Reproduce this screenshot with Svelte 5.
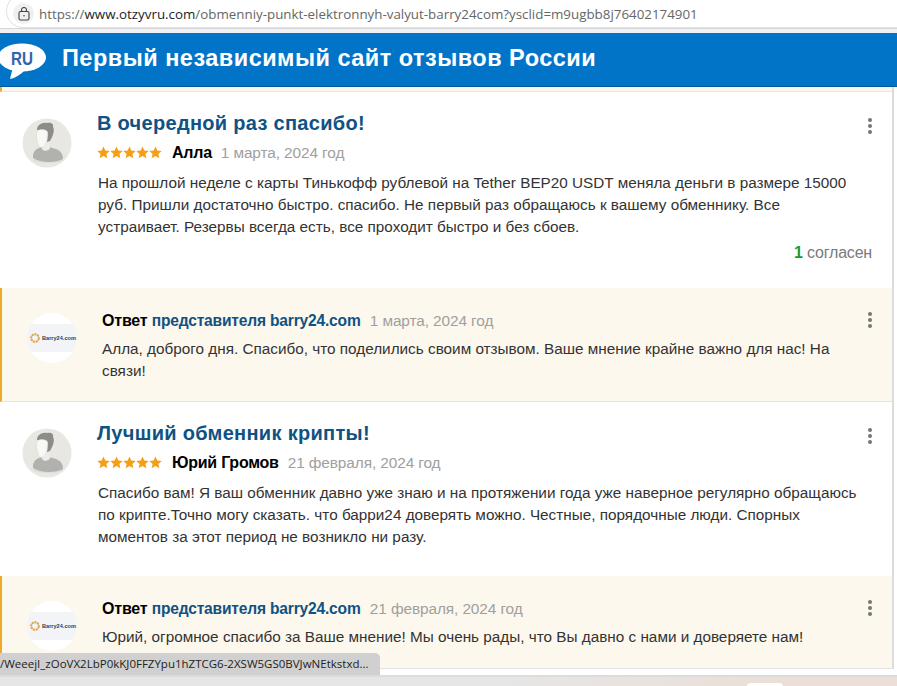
<script>
  const reviews = [
    {
      title: 'В очередной раз спасибо!',
      author: 'Алла',
      date: '1 марта, 2024 год',
      lines: ['На прошлой неделе с карты Тинькофф рублевой на Tether BEP20 USDT меняла деньги в размере 15000', 'руб. Пришли достаточно быстро. спасибо. Не первый раз обращаюсь к вашему обменнику. Все', 'устраивает. Резервы всегда есть, все проходит быстро и без сбоев.'],
      agree: true,
      replyDate: '1 марта, 2024 год',
      replyLines: ['Алла, доброго дня. Спасибо, что поделились своим отзывом. Ваше мнение крайне важно для нас! На', 'связи!']
    },
    {
      title: 'Лучший обменник крипты!',
      author: 'Юрий Громов',
      date: '21 февраля, 2024 год',
      lines: ['Спасибо вам! Я ваш обменник давно уже знаю и на протяжении года уже наверное регулярно обращаюсь', 'по крипте.Точно могу сказать. что барри24 доверять можно. Честные, порядочные люди. Спорных', 'моментов за этот период не возникло ни разу.'],
      agree: false,
      replyDate: '21 февраля, 2024 год',
      replyLines: ['Юрий, огромное спасибо за Ваше мнение! Мы очень рады, что Вы давно с нами и доверяете нам!']
    }
  ];
  const starOffsets = [0, 13, 26, 39, 52];
</script>

{#snippet dots()}
  <div class="dots"><i></i><i></i><i></i></div>
{/snippet}

<div class="page">
  <div class="chrome">
    <div class="urlbar">
      <span class="lockwrap">
        <svg width="12" height="14" viewBox="0 0 12 14" fill="none" stroke="#444" stroke-width="1.1">
          <rect x="1" y="4.5" width="10" height="8.5" rx="1.5"/>
          <path d="M3.5 4.5V3a2.5 2.5 0 0 1 5 0v1.5"/>
          <circle cx="6" cy="8.7" r=".8" fill="#444" stroke="none"/>
        </svg>
      </span>
      <span class="url"><span class="dim">https://</span>www.otzyvru.com<span class="dim">/obmenniy-punkt-elektronnyh-valyut-barry24com?ysclid=m9ugbb8j76402174901</span></span>
    </div>
  </div>
  <div class="chromegap"></div>

  <header class="banner">
    <svg class="bubble" width="46" height="37" viewBox="0 0 46 37">
      <ellipse cx="22" cy="14.5" rx="24" ry="14" fill="#fff"/>
      <path d="M13 24L10 36C15 35 20 32 25 27Z" fill="#fff"/>
      <text x="22" y="21.5" text-anchor="middle" class="ru" textLength="22" lengthAdjust="spacingAndGlyphs">RU</text>
    </svg>
    <h1>Первый независимый сайт отзывов России</h1>
  </header>

  <main class="content">
    <div class="topstrip"></div>
    {#each reviews as r, i}
      <article class="review" class:second={i === 1}>
        <div class="avatar">
          <svg width="50" height="50" viewBox="0 0 50 50">
            <circle cx="25" cy="25" r="24.5" fill="#e8e7e2"/>
            <ellipse cx="26" cy="42" rx="15" ry="3" fill="#dedddb"/>
            <path d="M11 40c0-5 1-8 6-10l6-3 4 2 7 2c5 2 7 5 7 10-8 4-22 4-30-1z" fill="#b1b1ae"/>
            <path d="M19 25l1 6c2 3 7 2 8-1l-1-6z" fill="#ececeb"/>
            <path d="M15 12c0-5 5-8 10-7 4-1 7 1 6 4 2 3 0 9-3 14l-3 1 1-10-11-2z" fill="#8c8c89"/>
            <path d="M15 13c3-2 7-2 10 0 1 6 0 13-4 16-2 1-4 0-5-3-1-4-2-8-1-13z" fill="#f8f8f7" stroke="#d5d5d3" stroke-width=".5"/>
          </svg>
        </div>
        <div class="body">
          <div class="head">
            <h2>{r.title}</h2>
            {@render dots()}
          </div>
          <div class="meta">
            <svg class="stars" width="65" height="13" viewBox="0 0 65 13">
              {#each starOffsets as x}
                <path transform="translate({x} 0)" d="M6.5 .5l1.8 4.1 4.4.4-3.3 2.9 1 4.4-3.9-2.3-3.9 2.3 1-4.4L.3 5l4.4-.4z" fill="#f59f16"/>
              {/each}
            </svg>
            <span class="author">{r.author}</span>
            <span class="date">{r.date}</span>
          </div>
          <p class="text">{#each r.lines as l}<span class="ln">{l}</span>{/each}</p>
          {#if r.agree}
            <div class="agree"><b>1</b> согласен</div>
          {/if}
        </div>
      </article>

      <section class="reply" class:last={i === 1}>
        <div class="logo">
          <div class="logostrip">
            <svg width="10" height="10" viewBox="0 0 10 10">
              <circle cx="5" cy="5" r="3.8" fill="none" stroke="#e3a24a" stroke-width="2" stroke-dasharray="2.2 .6"/>
            </svg>
            <span>Barry24.com</span>
          </div>
        </div>
        <div class="body">
          <div class="rhead">
            <div class="rmeta">
              <b>Ответ</b> <a href="#top">представителя barry24.com</a>
              <span class="date">{r.replyDate}</span>
            </div>
            {@render dots()}
          </div>
          <p class="text">{#each r.replyLines as l}<span class="ln">{l}</span>{/each}</p>
        </div>
      </section>
    {/each}
  </main>

  <div class="statusbar"><span>/WeeejI_zOoVX2LbP0kKJ0FFZYpu1hZTCG6-2XSW5GS0BVJwNEtkstxd...</span></div>
  <div class="footer"><span class="tab"></span></div>
</div>

<style>
  :global(body) {
    margin: 0;
    background: #fff;
  }
  .page {
    position: relative;
    width: 897px;
    height: 686px;
    overflow: hidden;
    font-family: "Liberation Sans", Arial, sans-serif;
    background: #fff;
  }
  .chrome {
    height: 28px;
    background: #fff;
    border-bottom: 1px solid #d6d6d6;
    overflow: hidden;
  }
  .chromegap {
    height: 4px;
    background: #eff1f4;
  }
  .urlbar {
    display: flex;
    align-items: center;
    height: 34px;
    margin: -6px 0 0 6px;
    padding: 0 0 0 6px;
    gap: 5px;
    border: 1px solid #e2e2e2;
    border-radius: 18px 0 0 18px;
    border-right: 0;
    box-sizing: border-box;
  }
  .lockwrap {
    display: flex;
    align-items: center;
    justify-content: center;
    flex: none;
    width: 21px;
    height: 21px;
    margin-top: 5px;
    border-radius: 50%;
    background: #f0f0f0;
  }
  .url {
    margin-top: 5px;
    font: 13.35px "Open Sans", "Noto Sans", sans-serif;
    color: #1d1d1d;
    white-space: nowrap;
  }
  .dim { color: #666; }
  .banner {
    display: flex;
    align-items: center;
    height: 53px;
    background: #0274c8;
    border-bottom: 1px solid #05589a;
  }
  .bubble {
    flex: none;
    margin-top: 3px;
  }
  .ru {
    font: 700 18px "Liberation Sans", sans-serif;
    fill: #2f66ac;
  }
  h1 {
    margin: -2px 0 0 16px;
    color: #fff;
    font-size: 23.5px;
    font-weight: 700;
    letter-spacing: .48px;
    white-space: nowrap;
  }
  .content {
    width: 892px;
    border-right: 2px solid #dcdcdc;
    background: #fff;
  }
  .topstrip {
    height: 5px;
    background: #fbf7ee;
    border-left: 2px solid #efa92b;
    border-bottom: 1px solid #e6e6e6;
    box-sizing: border-box;
  }
  .review {
    display: flex;
    height: 196px;
    padding: 19px 22px 0 22px;
    box-sizing: border-box;
    gap: 26px;
  }
  .review.second {
    height: 174px;
  }
  .avatar {
    flex: none;
    width: 50px;
    height: 50px;
    margin-top: 7px;
  }
  .body {
    flex: 1;
    min-width: 0;
  }
  .head {
    display: flex;
    justify-content: space-between;
  }
  h2 {
    margin: 0 0 0 -1px;
    color: #0f5283;
    font-size: 20px;
    line-height: 25px;
    font-weight: 700;
    letter-spacing: .3px;
  }
  .dots {
    display: flex;
    flex-direction: column;
    gap: 2px;
    margin-top: 7px;
    margin-right: -1.5px;
  }
  .dots i {
    display: block;
    width: 4px;
    height: 4px;
    border-radius: 50%;
    background: #757575;
  }
  .meta {
    display: flex;
    align-items: center;
    height: 20px;
    margin-top: 7px;
  }
  .stars {
    flex: none;
    margin: -2px 10px 0 -1px;
  }
  .author {
    font-size: 16px;
    font-weight: 700;
    color: #000;
    letter-spacing: -.25px;
    margin-right: 9px;
  }
  .date {
    font-size: 15.4px;
    color: #a0a0a0;
    letter-spacing: -.1px;
  }
  .text {
    margin: 9px 0 0;
    color: #333;
    font-size: 15.3px;
    line-height: 22px;
  }
  .ln {
    display: block;
    white-space: nowrap;
  }
  .agree {
    margin-top: 5px;
    margin-right: -2px;
    text-align: right;
    font-size: 16px;
    line-height: 20px;
    color: #7a7a7a;
    letter-spacing: -.2px;
  }
  .agree b {
    color: #1c9a2a;
  }
  .reply {
    display: flex;
    height: 114px;
    background: #fdf8ee;
    border-left: 2px solid #efa92b;
    border-bottom: 1px solid #e3e3e3;
    box-sizing: border-box;
    padding: 22px 22px 0 25px;
    gap: 25px;
  }
  .reply.last {
    height: 93px;
  }
  .logo {
    flex: none;
    width: 50px;
    height: 50px;
    margin-top: 3px;
    border-radius: 50%;
    background: #fff;
    overflow: hidden;
    display: flex;
    align-items: center;
  }
  .logostrip {
    width: 100%;
    height: 28px;
    box-sizing: border-box;
    padding-left: 3px;
    background: #f3f4f8;
    display: flex;
    align-items: center;
    gap: 2px;
    font-size: 5.6px;
    font-weight: 700;
    color: #3c3c3c;
    white-space: nowrap;
  }
  .rhead {
    display: flex;
    justify-content: space-between;
    height: 22px;
    align-items: flex-start;
  }
  .rmeta {
    font-size: 16px;
    line-height: 22px;
    letter-spacing: -.2px;
    color: #000;
    white-space: nowrap;
  }
  .rmeta a {
    color: #0f5283;
    font-size: 15.6px;
    font-weight: 700;
    text-decoration: none;
  }
  .rmeta .date {
    margin-left: 5px;
  }
  .reply .dots {
    margin-top: 2px;
  }
  .reply .text {
    margin-top: 6px;
  }
  .statusbar {
    position: absolute;
    left: 0;
    top: 653px;
    width: 380px;
    height: 23px;
    background: #d0d0d0;
    border-radius: 0 5px 0 0;
    font: 11.5px "Open Sans", "Noto Sans", sans-serif;
    color: #222;
    line-height: 22px;
    white-space: nowrap;
  }
  .footer {
    position: absolute;
    left: 0;
    right: 0;
    top: 675px;
    height: 11px;
    background: linear-gradient(90deg, #e6e6e6 0%, #e6e6e6 55%, #ebdfd8 85%, #ebdfd8 100%);
    border-top: 2px solid #dcdcdc;
    box-sizing: border-box;
  }
  .tab {
    position: absolute;
    left: 747px;
    top: 6px;
    width: 36px;
    height: 6px;
    border-radius: 4px 4px 0 0;
    background: #fff;
  }
</style>
